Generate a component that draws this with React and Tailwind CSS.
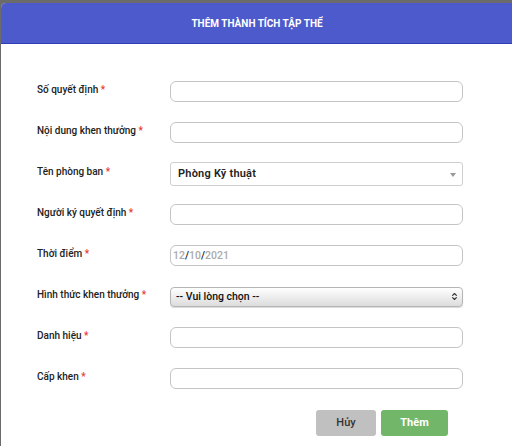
import { ChevronsUpDown } from 'lucide-react';

const rows = [
  { label: 'Số quyết định', type: 'input' },
  { label: 'Nội dung khen thưởng', type: 'input' },
  { label: 'Tên phòng ban', type: 'select', value: 'Phòng Kỹ thuật' },
  { label: 'Người ký quyết định', type: 'input' },
  { label: 'Thời điểm', type: 'date' },
  { label: 'Hình thức khen thưởng', type: 'native', value: '-- Vui lòng chọn --' },
  { label: 'Danh hiệu', type: 'input' },
  { label: 'Cấp khen', type: 'input' },
];

function Field({ row }) {
  if (row.type === 'select') {
    return (
      <div className="h-[24px] w-[293px] border border-[#cfcfcf] rounded-[3px] flex items-center justify-between pl-[7px] pr-[6px] pt-[2px] bg-white">
        <span className="text-[11px] font-semibold tracking-[0.02em] text-[#222]">{row.value}</span>
        <span className="w-0 h-0 border-l-[3px] border-r-[3px] border-t-[4px] border-l-transparent border-r-transparent border-t-[#999]"></span>
      </div>
    );
  }
  if (row.type === 'native') {
    return (
      <div className="h-[20px] w-[293px] border border-[#b5b5b5] rounded-[4px] flex items-center justify-between pl-[5px] pr-[3px] bg-gradient-to-b from-white to-[#dcdcdc] shadow-[0_1px_1px_rgba(0,0,0,0.15)]">
        <span className="text-[10.5px] font-medium text-[#111]">{row.value}</span>
        <ChevronsUpDown size={9} strokeWidth={3} className="text-[#333]" />
      </div>
    );
  }
  if (row.type === 'date') {
    return (
      <div className="h-[21px] w-[293px] border border-[#c4c4c4] rounded-[6px] flex items-center pl-[2px] bg-white text-[10.5px] font-medium text-[#aaa]">
        <span>12</span><span className="text-[#222]">/</span><span>10</span><span className="text-[#222]">/</span><span>2021</span>
      </div>
    );
  }
  return <div className="h-[21px] w-[293px] border border-[#c4c4c4] rounded-[6px] bg-white"></div>;
}

export default function App() {
  return (
    <div className="w-[512px] h-[446px] bg-[#6b6b6b] pt-[3px] pl-px overflow-hidden font-['Roboto','Liberation_Sans',sans-serif]">
      <div className="w-[520px] h-[450px] bg-white rounded-tl-[5px] overflow-hidden">
        <div className="h-[41px] bg-[#4c5acb] border-b border-[#2f3db5] flex items-center justify-center pr-[8px]">
          <h1 className="text-[10px] font-bold text-white">THÊM THÀNH TÍCH TẬP THỂ</h1>
        </div>

        <div className="pt-[27px] pl-[36px]">
          {rows.map((row) => (
            <div key={row.label} className="h-[41px] flex items-center">
              <div className="w-[133px] pb-[4px] text-[10px] font-medium text-[#222]">
                {row.label} <span className="text-[#e53935]">*</span>
              </div>
              <Field row={row} />
            </div>
          ))}

          <div className="w-[411px] flex justify-end gap-[5px] mt-[11px]">
            <button className="w-[60px] h-[26px] bg-[#c0c0c0] rounded-[3px] text-[11px] font-medium text-[#333]">Hủy</button>
            <button className="w-[67px] h-[26px] bg-[#72b66a] rounded-[3px] text-[11px] font-bold text-white">Thêm</button>
          </div>
        </div>
      </div>
    </div>
  );
}
